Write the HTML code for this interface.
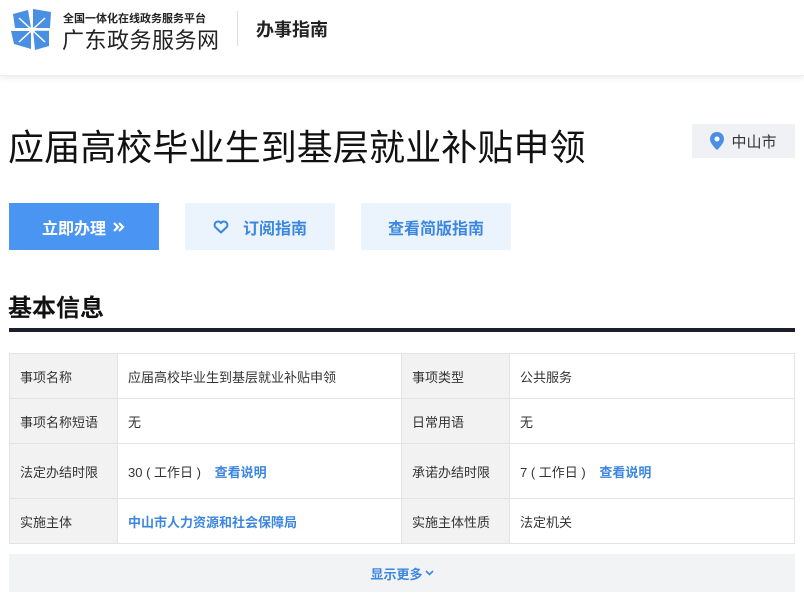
<!DOCTYPE html>
<html><head><meta charset="utf-8"><style>
*{margin:0;padding:0;box-sizing:border-box}
body{width:804px;height:597px;overflow:hidden;background:#fff;font-family:"Liberation Sans","Noto Sans CJK SC",sans-serif;color:#333;position:relative}
.a{position:absolute}
.hdr{left:0;top:0;width:804px;height:76px;background:#fff;box-shadow:0 2px 6px rgba(0,0,0,.08);border-bottom:1px solid #eee}
.btn{height:47px;display:flex;align-items:center;justify-content:center;font-size:16px;font-weight:bold}
table{border-collapse:collapse;position:absolute;left:9px;top:353px;width:786px;font-size:13px}
td{border:1px solid #e3e3e3;padding:0 10px;color:#333}
td.k{background:#f2f2f2;width:108px}
.lk{color:#3b86e0;font-weight:bold}
</style></head><body>
<div class="a hdr">
<svg class="a" style="left:9px;top:6px" width="46" height="46" viewBox="0 0 46 46">
<g fill="#4a90e2">
<polygon points="4,8 19,4 22,22 6,22"/>
<polygon points="24,3 42,6 41,22 24,22"/>
<polygon points="24,24 40,24 40,40 26,44"/>
<polygon points="2,25 22,25 22,43 5,38"/>
</g>
<g stroke="#fff" stroke-width="1.5"><line x1="10" y1="12" x2="36" y2="36"/><line x1="36" y1="12" x2="10" y2="36"/><line x1="23" y1="6" x2="23" y2="42"/><line x1="5" y1="24" x2="41" y2="24"/></g>
<circle cx="23" cy="24" r="3" fill="#fff"/>
</svg>
<div class="a" style="left:63px;top:10px;font-size:11px;color:#222;font-weight:bold">全国一体化在线政务服务平台</div>
<div class="a" style="left:62px;top:23px;font-size:22px;color:#222;letter-spacing:0.5px">广东政务服务网</div>
<div class="a" style="left:237px;top:11px;width:1px;height:35px;background:#ddd"></div>
<div class="a" style="left:256px;top:16px;font-size:18px;font-weight:bold;color:#222">办事指南</div>
</div>
<div class="a" style="left:8px;top:119px;font-size:36px;color:#111;letter-spacing:0.1px">应届高校毕业生到基层就业补贴申领</div>
<div class="a" style="left:692px;top:124px;width:103px;height:34px;background:#eff1f4;display:flex;align-items:center;justify-content:center;font-size:15px;color:#333">
<svg width="14" height="18" viewBox="0 0 14 18" style="margin-right:7px"><path d="M7 0C3 0 0 3 0 7c0 5 7 11 7 11s7-6 7-11C14 3 11 0 7 0z" fill="#4a90e2"/><circle cx="7" cy="7" r="2.5" fill="#fff"/></svg>中山市</div>
<div class="a btn" style="left:9px;top:203px;width:150px;background:#4a94f2;color:#fff">立即办理
<svg width="14" height="12" viewBox="0 0 14 12" style="margin-left:6px"><path d="M2 2l4 4-4 4M7 2l4 4-4 4" stroke="#fff" stroke-width="2.2" fill="none"/></svg></div>
<div class="a btn" style="left:185px;top:203px;width:150px;background:#ebf4fd;color:#3b86e0">
<svg width="16" height="14" viewBox="0 0 16 14" style="margin-right:14px"><path d="M8 12.5L2.2 7A3.3 3.3 0 0 1 8 3a3.3 3.3 0 0 1 5.8 4z" stroke="#3b86e0" stroke-width="2" fill="none" stroke-linejoin="round"/></svg>订阅指南</div>
<div class="a btn" style="left:361px;top:203px;width:150px;background:#ebf4fd;color:#3b86e0">查看简版指南</div>
<div class="a" style="left:8px;top:288px;font-size:24px;font-weight:bold;color:#111">基本信息</div>
<div class="a" style="left:9px;top:328px;width:786px;height:4px;background:#1a1f2b"></div>
<table>
<tr style="height:45px"><td class="k">事项名称</td><td style="width:284px">应届高校毕业生到基层就业补贴申领</td><td class="k">事项类型</td><td>公共服务</td></tr>
<tr style="height:45px"><td class="k">事项名称短语</td><td>无</td><td class="k">日常用语</td><td>无</td></tr>
<tr style="height:55px"><td class="k">法定办结时限</td><td>30 ( 工作日 ) <span class="lk" style="margin-left:10px">查看说明</span></td><td class="k">承诺办结时限</td><td>7 ( 工作日 ) <span class="lk" style="margin-left:10px">查看说明</span></td></tr>
<tr style="height:45px"><td class="k">实施主体</td><td class="lk">中山市人力资源和社会保障局</td><td class="k">实施主体性质</td><td>法定机关</td></tr>
</table>
<div class="a" style="left:9px;top:554px;width:786px;height:38px;background:#f2f3f5;display:flex;align-items:center;justify-content:center;font-size:13px;color:#3b86e0;font-weight:bold">显示更多<svg width="9" height="6" viewBox="0 0 9 6" style="margin-left:2px"><path d="M1 1l3.5 3.5L8 1" stroke="#3b86e0" stroke-width="1.6" fill="none"/></svg></div>
</body></html>
